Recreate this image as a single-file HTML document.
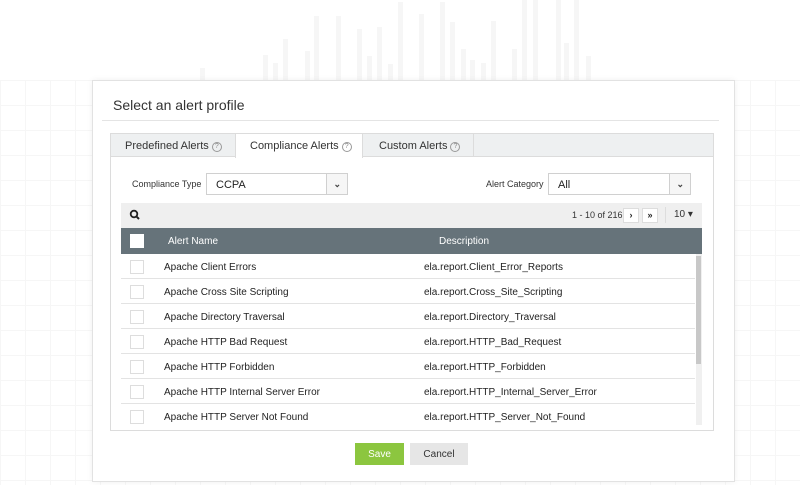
<!DOCTYPE html>
<html><head><style>
*{box-sizing:border-box;margin:0;padding:0}
body{width:800px;height:485px;overflow:hidden;background:#fff;font-family:"Liberation Sans",sans-serif;color:#222;position:relative}
.a{position:absolute}
.bar{position:absolute;width:5px;background:#f6f6f6;bottom:405px}
.grid{position:absolute;left:0;top:80px;width:800px;height:405px;background-image:linear-gradient(#f6f6f6 1px,transparent 1px),linear-gradient(90deg,#f6f6f6 1px,transparent 1px);background-size:25px 25px}
.modal{position:absolute;left:92px;top:80px;width:643px;height:402px;background:#fff;border:1px solid #e2e2e2;box-shadow:0 0 6px rgba(0,0,0,.06)}
.sel{position:absolute;height:22px;border:1px solid #d0d0d0;background:#fff;font-size:11px;padding:5px 9px}
.sel i{position:absolute;right:0;top:0;width:21px;height:20px;border-left:1px solid #d0d0d0;background:#f6f6f6}
.row{position:absolute;left:121px;width:574px;height:25px;border-bottom:1px solid #e3e3e3;font-size:10px}
.row span{position:absolute;top:8px}
.cb{position:absolute;left:9px;top:6px;width:14px;height:14px;border:1px solid #ddd;background:#fff}
.q{display:inline-block;width:10px;height:10px;border:1px solid #999;border-radius:50%;font-size:7px;line-height:8px;text-align:center;color:#888;vertical-align:1px;margin-left:3px}
</style></head><body>
<div class="grid"></div>
<div class="bar" style="left:200px;height:12px"></div>
<div class="bar" style="left:263px;height:25px"></div>
<div class="bar" style="left:273px;height:17px"></div>
<div class="bar" style="left:283px;height:41px"></div>
<div class="bar" style="left:305px;height:29px"></div>
<div class="bar" style="left:314px;height:64px"></div>
<div class="bar" style="left:336px;height:64px"></div>
<div class="bar" style="left:357px;height:51px"></div>
<div class="bar" style="left:367px;height:24px"></div>
<div class="bar" style="left:377px;height:53px"></div>
<div class="bar" style="left:388px;height:16px"></div>
<div class="bar" style="left:398px;height:78px"></div>
<div class="bar" style="left:419px;height:66px"></div>
<div class="bar" style="left:440px;height:78px"></div>
<div class="bar" style="left:450px;height:58px"></div>
<div class="bar" style="left:461px;height:31px"></div>
<div class="bar" style="left:470px;height:20px"></div>
<div class="bar" style="left:481px;height:17px"></div>
<div class="bar" style="left:491px;height:59px"></div>
<div class="bar" style="left:512px;height:31px"></div>
<div class="bar" style="left:522px;height:80px"></div>
<div class="bar" style="left:533px;height:80px"></div>
<div class="bar" style="left:556px;height:80px"></div>
<div class="bar" style="left:564px;height:37px"></div>
<div class="bar" style="left:574px;height:80px"></div>
<div class="bar" style="left:586px;height:24px"></div>
<div class="modal"></div>
<div class="a" style="left:113px;top:97px;font-size:14px;color:#333">Select an alert profile</div>
<div class="a" style="left:102px;top:120px;width:617px;height:1px;background:#e4e4e4"></div>
<div class="a" style="left:110px;top:133px;width:604px;height:298px;border:1px solid #dcdcdc;background:#fff"></div>
<div class="a" style="left:111px;top:134px;width:602px;height:23px;background:#eef0f1;border-bottom:1px solid #dcdcdc"></div>
<div class="a" style="left:235px;top:134px;width:128px;height:24px;background:#fff;border-left:1px solid #dcdcdc;border-right:1px solid #dcdcdc"></div>
<div class="a" style="left:473px;top:134px;width:1px;height:23px;background:#dcdcdc"></div>
<div class="a" style="left:125px;top:140px;font-size:11px;color:#333">Predefined Alerts<span class="q">?</span></div>
<div class="a" style="left:250px;top:140px;font-size:11px;color:#333">Compliance Alerts<span class="q">?</span></div>
<div class="a" style="left:379px;top:140px;font-size:11px;color:#333">Custom Alerts<span class="q">?</span></div>
<div class="a" style="left:132px;top:179px;font-size:9px;color:#333">Compliance Type</div>
<div class="sel" style="left:206px;top:173px;width:142px">CCPA<i></i><b class="a" style="right:6px;top:5px;font-size:9px;font-weight:bold;color:#444">&#8964;</b></div>
<div class="a" style="left:486px;top:179px;font-size:9px;color:#333">Alert Category</div>
<div class="sel" style="left:548px;top:173px;width:143px">All<i></i><b class="a" style="right:6px;top:5px;font-size:9px;font-weight:bold;color:#444">&#8964;</b></div>
<div class="a" style="left:121px;top:203px;width:581px;height:25px;background:#efefef"></div>
<svg class="a" style="left:129px;top:209px" width="12" height="12" viewBox="0 0 12 12"><circle cx="5" cy="5" r="3.3" fill="none" stroke="#222" stroke-width="1.8"/><path d="M7.3 7.3L10 10" stroke="#222" stroke-width="2"/></svg>
<div class="a" style="left:572px;top:210px;font-size:9px;color:#333">1 - 10 of 216</div>
<div class="a" style="left:623px;top:208px;width:16px;height:15px;background:#fff;border:1px solid #ddd;font-size:9px;font-weight:bold;text-align:center;line-height:13px">&#8250;</div>
<div class="a" style="left:642px;top:208px;width:16px;height:15px;background:#fff;border:1px solid #ddd;font-size:9px;font-weight:bold;text-align:center;line-height:13px">&#187;</div>
<div class="a" style="left:665px;top:207px;width:1px;height:16px;background:#ddd"></div>
<div class="a" style="left:674px;top:209px;font-size:10px;color:#333">10 &#9662;</div>
<div class="a" style="left:121px;top:228px;width:581px;height:26px;background:#66737a"></div>
<div class="a" style="left:130px;top:234px;width:14px;height:14px;background:#fff"></div>
<div class="a" style="left:168px;top:236px;font-size:10px;color:#fff">Alert Name</div>
<div class="a" style="left:439px;top:236px;font-size:10px;color:#fff">Description</div>
<div class="a" style="left:121px;top:254px;width:581px;height:171px;overflow:hidden">
<div class="row" style="left:0;top:0"><div class="cb"></div><span style="left:43px">Apache Client Errors</span><span style="left:303px">ela.report.Client_Error_Reports</span></div>
<div class="row" style="left:0;top:25px"><div class="cb"></div><span style="left:43px">Apache Cross Site Scripting</span><span style="left:303px">ela.report.Cross_Site_Scripting</span></div>
<div class="row" style="left:0;top:50px"><div class="cb"></div><span style="left:43px">Apache Directory Traversal</span><span style="left:303px">ela.report.Directory_Traversal</span></div>
<div class="row" style="left:0;top:75px"><div class="cb"></div><span style="left:43px">Apache HTTP Bad Request</span><span style="left:303px">ela.report.HTTP_Bad_Request</span></div>
<div class="row" style="left:0;top:100px"><div class="cb"></div><span style="left:43px">Apache HTTP Forbidden</span><span style="left:303px">ela.report.HTTP_Forbidden</span></div>
<div class="row" style="left:0;top:125px"><div class="cb"></div><span style="left:43px">Apache HTTP Internal Server Error</span><span style="left:303px">ela.report.HTTP_Internal_Server_Error</span></div>
<div class="row" style="left:0;top:150px"><div class="cb"></div><span style="left:43px">Apache HTTP Server Not Found</span><span style="left:303px">ela.report.HTTP_Server_Not_Found</span></div>
<div class="a" style="left:575px;top:0;width:6px;height:171px;background:#f0f0f0"></div>
<div class="a" style="left:575px;top:2px;width:5px;height:108px;background:#c8c8c8"></div>
</div>
<div class="a" style="left:355px;top:443px;width:49px;height:22px;background:#8cc63f;color:#fff;font-size:10px;text-align:center;padding-top:6px">Save</div>
<div class="a" style="left:410px;top:443px;width:58px;height:22px;background:#e6e6e6;color:#333;font-size:10px;text-align:center;padding-top:6px">Cancel</div>
</body></html>
